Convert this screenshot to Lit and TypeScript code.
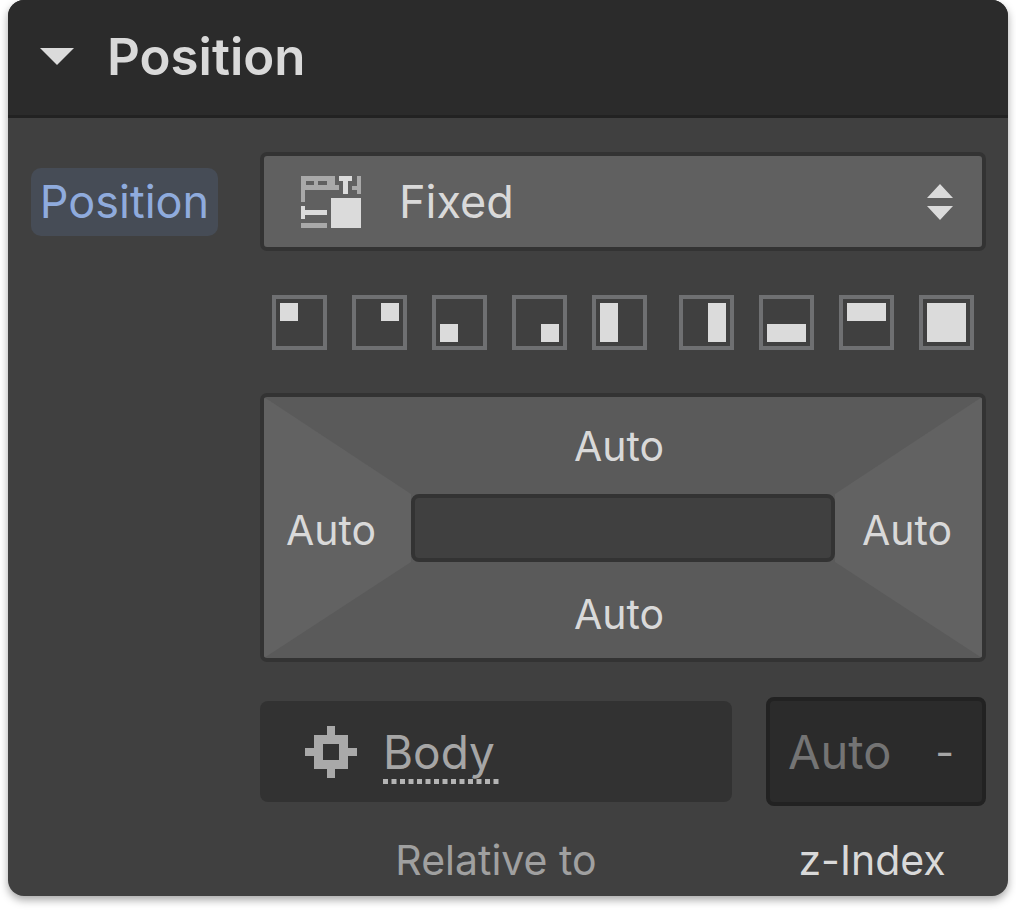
import { LitElement, html, css, svg } from "lit";
import { customElement, state } from "lit/decorators.js";

interface Preset {
  name: string;
  x: number;
  y: number;
  w: number;
  h: number;
}

const CORNER_PRESETS: Preset[] = [
  { name: "Top left", x: 8, y: 8, w: 18, h: 18 },
  { name: "Top right", x: 29, y: 8, w: 18, h: 18 },
  { name: "Bottom left", x: 8, y: 29, w: 18, h: 18 },
  { name: "Bottom right", x: 29, y: 29, w: 18, h: 18 },
  { name: "Left", x: 8, y: 8, w: 18, h: 39 },
];

const EDGE_PRESETS: Preset[] = [
  { name: "Right", x: 29, y: 8, w: 18, h: 39 },
  { name: "Bottom", x: 8, y: 29, w: 39, h: 18 },
  { name: "Top", x: 8, y: 8, w: 39, h: 18 },
  { name: "Full", x: 8, y: 8, w: 39, h: 39 },
];

@customElement("app-root")
export class AppRoot extends LitElement {
  @state() private open = true;

  static styles = css`
    :host {
      display: block;
      min-height: 100vh;
      box-sizing: border-box;
      padding: 0 8px 17px;
      background: #fff;
      font-family: Inter, sans-serif;
      font-size: 41px;
      line-height: 52px;
      color: #d9d9d9;
    }
    * {
      box-sizing: border-box;
    }
    button,
    input,
    select {
      font: inherit;
      color: inherit;
      margin: 0;
      padding: 0;
      border: 0;
      background: none;
      border-radius: 0;
    }
    button {
      cursor: pointer;
    }
    svg {
      display: block;
    }
    .panel {
      background: #404040;
      border-radius: 16px;
      overflow: hidden;
      box-shadow: 0 4px 8px rgba(0, 0, 0, 0.35);
    }
    .header {
      margin: 0;
      background: #2b2b2b;
      border-bottom: 3px solid #222;
      font-size: 51px;
      line-height: 60px;
      font-weight: 600;
    }
    .toggle {
      display: flex;
      align-items: center;
      gap: 33px;
      width: 100%;
      padding: 27px 32px 28px;
      text-align: left;
    }
    .content {
      display: grid;
      grid-template-columns: 187px minmax(0, 1fr);
      column-gap: 42px;
      padding: 34px 22px 10px 23px;
    }
    .badge {
      align-self: start;
      margin-top: 16px;
      padding: 4px 0;
      height: 68px;
      line-height: 60px;
      font-size: 45px;
      text-align: center;
      border-radius: 10px;
      background: #464c56;
      color: #8fabdd;
    }
    .fields {
      display: flex;
      flex-direction: column;
    }
    .select {
      display: grid;
      align-items: center;
    }
    .select > * {
      grid-area: 1 / 1;
    }
    .select select {
      appearance: none;
      width: 100%;
      height: 99px;
      padding: 0 80px 0 135px;
      border: 4px solid #333;
      border-radius: 7px;
      background: #606060;
      font-size: 45px;
    }
    .mode {
      margin-left: 41px;
      pointer-events: none;
    }
    .arrows {
      justify-self: end;
      margin-right: 33px;
      pointer-events: none;
    }
    .presets,
    .group {
      display: flex;
      justify-content: space-between;
    }
    .presets {
      padding: 44px 12px 43px;
    }
    .group {
      gap: 25px;
    }
    .inset {
      display: grid;
      grid-template-columns: 147px minmax(0, 1fr) 147px;
      grid-template-rows: 97px 68px 96px;
      border: 4px solid #333;
      border-radius: 7px;
      background: #5a5a5a;
      overflow: hidden;
    }
    .side {
      grid-row: 1 / 4;
      background: #626262;
      text-align: left;
    }
    .left {
      grid-column: 1;
      padding: 4px 0 0 22px;
      clip-path: polygon(0 0, 100% 97px, 100% 165px, 0 100%);
    }
    .right {
      grid-column: 3;
      padding: 4px 0 0 27px;
      clip-path: polygon(100% 0, 0 97px, 0 165px, 100% 100%);
    }
    .edge {
      grid-column: 2;
      padding-right: 8px;
    }
    .core + .edge {
      padding-top: 8px;
    }
    .core {
      grid-column: 2;
      grid-row: 2;
      border: 4px solid #333;
      border-radius: 8px;
      background: #404040;
    }
    .bottom {
      display: grid;
      grid-template-columns: minmax(0, 1fr) 220px;
      column-gap: 34px;
      align-items: center;
      justify-items: center;
      margin-top: 35px;
    }
    .parent {
      display: flex;
      align-items: center;
      gap: 26px;
      width: 100%;
      height: 101px;
      padding-left: 45px;
      border-radius: 8px;
      background: #323232;
      color: #a6a6a6;
      font-size: 46px;
    }
    .link {
      display: flex;
      flex-direction: column;
      margin-top: 6px;
      line-height: 54px;
      color: inherit;
      text-decoration: none;
    }
    .zfield {
      display: flex;
      align-items: center;
      width: 100%;
      height: 109px;
      padding: 0 28px 0 18px;
      border: 4px solid #222;
      border-radius: 8px;
      background: #2b2b2b;
      font-size: 47px;
    }
    .zfield input {
      flex: 1;
      min-width: 0;
    }
    .zfield input::placeholder {
      color: #747474;
      opacity: 1;
    }
    .unit {
      color: #a6a6a6;
      font-size: 41px;
    }
    .caption {
      margin-top: 28px;
    }
    label.caption {
      padding-right: 8px;
    }
    .muted {
      color: #a0a0a0;
    }
  `;

  private preset(p: Preset) {
    return html`<button type="button" aria-label=${p.name}>
      <svg width="55" height="55" viewBox="0 0 55 55">
        <rect x="2" y="2" width="51" height="51" fill="none" stroke="#6f7072" stroke-width="4" />
        ${svg`<rect x=${p.x} y=${p.y} width=${p.w} height=${p.h} fill="#dbdbdb" />`}
      </svg>
    </button>`;
  }

  render() {
    return html`
      <section class="panel">
        <h2 class="header">
          <button class="toggle" type="button" aria-expanded=${this.open} @click=${() => (this.open = !this.open)}>
            <svg width="34" height="18" viewBox="0 0 34 18"><path d="M0 0h34L17 17z" fill="#dbdbdb" /></svg>
            <span>Position</span>
          </button>
        </h2>
        ${this.open ? this.renderContent() : ""}
      </section>
    `;
  }

  private renderContent() {
    return html`
      <div class="content">
        <label class="badge" for="position">Position</label>
        <div class="fields">
          <div class="select">
            <select id="position">
              <option>Fixed</option>
            </select>
            <svg class="mode" width="60" height="52" viewBox="0 0 60 52">
              <path
                d="M0 0H34V9H38V14H4V26H0zM5 5v4h8V5zM17 5v4h9V5zM56 0h4v18h-4v-4h-5v-4h5zM0 47h26v5H0z"
                fill="#a9a9a9"
                fill-rule="evenodd"
              />
              <path d="M38 0h13v5h-4v13h-5V5h-4zM0 30h4v4h22v5H4v4H0zM30 22h30v30H30z" fill="#dbdbdb" />
            </svg>
            <svg class="arrows" width="26" height="36" viewBox="0 0 26 36">
              <path d="M13 0l13 14H0zM0 22h26L13 36z" fill="#dbdbdb" />
            </svg>
          </div>

          <div class="presets">
            <div class="group">${CORNER_PRESETS.map((p) => this.preset(p))}</div>
            <div class="group">${EDGE_PRESETS.map((p) => this.preset(p))}</div>
          </div>

          <div class="inset">
            <button class="side left" type="button" aria-label="Left: Auto">Auto</button>
            <button class="edge" type="button" aria-label="Top: Auto">Auto</button>
            <div class="core"></div>
            <button class="edge" type="button" aria-label="Bottom: Auto">Auto</button>
            <button class="side right" type="button" aria-label="Right: Auto">Auto</button>
          </div>

          <div class="bottom">
            <div class="parent">
              <svg width="52" height="52" viewBox="0 0 52 52">
                <path
                  d="M22 0h8v9h13v13h9v8h-9v13H30v9h-8v-9H9V30H0v-8h9V9h13zM18 18v16h16V18z"
                  fill="#a9a9a9"
                  fill-rule="evenodd"
                />
              </svg>
              <a class="link" href="#body">
                <span>Body</span>
                <svg width="116" height="5" viewBox="0 0 116 5">
                  <path d="M0 2.5H116" stroke="#b4b4b4" stroke-width="5" stroke-dasharray="5 3.5" />
                </svg>
              </a>
            </div>
            <div class="zfield">
              <input id="zindex" type="text" placeholder="Auto" />
              <button class="unit" type="button" aria-label="Unit">-</button>
            </div>
            <span class="caption muted">Relative to</span>
            <label class="caption" for="zindex">z-Index</label>
          </div>
        </div>
      </div>
    `;
  }
}
